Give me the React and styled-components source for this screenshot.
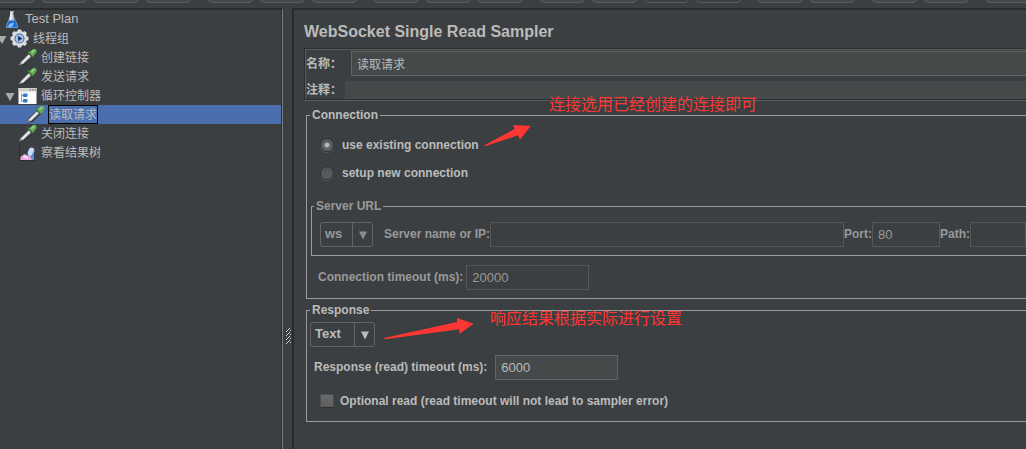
import React, { useState } from 'react';
import styled, { createGlobalStyle } from 'styled-components';

const GlobalStyle = createGlobalStyle`
  * {
    box-sizing: border-box;
  }

  body {
    margin: 0;
    background: #3c3f41;
    color: #bbbbbb;
    font-family: 'Liberation Sans', 'Noto Sans CJK SC', sans-serif;
    font-size: 12px;
    line-height: 14px;
    overflow: hidden;
  }

  input, select, button {
    font: inherit;
    color: inherit;
    margin: 0;
  }
`

const Window = styled.div`
  display: flex;
  flex-direction: column;
  height: 100vh;
`

const Toolbar = styled.div`
  display: flex;
  gap: 17px;
  height: 8px;
  margin-left: -10px;
  overflow: hidden;
`

const ToolGroup = styled.div`
  display: flex;
  flex: none;
  align-items: flex-end;
  height: 3px;
  gap: 7px;
`

const ToolButton = styled.button`
  width: 45px;
  height: 28px;
  padding: 0;
  border: 1px solid #5a5d5e;
  border-radius: 4px;
  background: ${props => props.$flat ? '#3c3f41' : '#45494a'};
`

const Main = styled.div`
  display: flex;
  flex: 1;
  min-height: 0;
`

const TreePanel = styled.nav`
  flex: none;
  width: 283px;
  border-top: 2px solid #292b2d;
  border-right: 1px solid #7b7d7e;
  box-shadow: inset -1px 0 0 #2b2d2f;
`

const TreeList = styled.ul`
  list-style: none;
  margin: 0 1px 0 0;
  padding: 0;
  overflow: hidden;
`

const TreeRow = styled.li`
  display: flex;
  align-items: center;
  gap: 2px;
  height: 19px;
  padding-left: ${props => 2 + props.$depth * 8}px;
  background: ${props => props.$selected ? '#4b6eaf' : 'transparent'};

  svg {
    flex: none;
    display: block;
  }
`

const Toggle = styled.button`
  flex: none;
  width: 12px;
  height: 19px;
  margin-left: -14px;
  padding: 2px 0 0;
  border: 0;
  background: none;
`

const NodeName = styled.span`
  height: 19px;
  padding: 0;
  border: 1px solid ${props => props.$selected ? '#000' : 'transparent'};
  line-height: ${props => props.$latin ? '16px' : '18px'};
  font-size: ${props => props.$latin ? '13px' : '12px'};
  margin-right: auto;
`

const Splitter = styled.div`
  flex: none;
  display: flex;
  align-items: center;
  justify-content: center;
  width: 9px;
  padding: 214px 0 0 1px;
`

const Editor = styled.main`
  position: relative;
  flex: 1;
  min-width: 0;
  padding-left: 10px;
  border-top: 2px solid #292b2d;
  border-left: 2px solid #292b2d;
`

const Title = styled.h1`
  margin: 0;
  height: 38px;
  padding-top: 12px;
  font-size: 16px;
  line-height: 20px;
`

const NamePanel = styled.div`
  display: flex;
  flex-direction: column;
  gap: 5px;
  padding: 2px 0 0 1px;
  border: 1px solid #2b2d2f;
  border-right: 0;
  box-shadow: inset 1px 1px 0 #5c5f60, 0 1px 0 #5c5f60;
`

const NameRow = styled.div`
  display: flex;
  align-items: center;
  gap: ${props => props.$gap}px;

  label {
    flex: none;
    width: 36px;
    font-weight: bold;
  }
`

const Field = styled.input`
  width: ${props => props.$width || 'auto'};
  flex: ${props => props.$grow ? '1' : 'none'};
  min-width: 0;
  height: 25px;
  padding: 0 5px 1px;
  border: 1px solid #646464;
  background: #45494a;
  font-size: 13px;
  font-weight: normal;
  outline: none;

  &:disabled {
    border-color: #555759;
    background: #3c3f41;
    color: #999999;
  }
`

const NameField = styled(Field)`
  padding: 0 5px;
  border-right: 0;
  font-size: 12px;
`

const CommentField = styled(NameField)`
  height: 18px;
  border: 0;
`

const Group = styled.fieldset`
  min-width: 0;
  margin: ${props => props.$margin};
  padding: ${props => props.$padding};
  border: 1px solid #999b9c;
  border-right: 0;
  font-weight: bold;

  legend {
    margin-left: 3px;
    padding: 0 2px;
  }

  &:disabled {
    color: #999999;
  }
`

const ServerGroup = styled(Group)`
  legend {
    margin-left: -6px;
  }
`

const OptionRow = styled.label`
  display: flex;
  align-items: center;
  gap: ${props => props.$gap || 8}px;
  height: 28px;
  padding-left: 13px;
`

const Radio = styled.input`
  appearance: none;
  width: 14px;
  height: 14px;
  border: 1px solid #303234;
  border-radius: 50%;
  background: linear-gradient(#4d5052, #5c5f61);
  box-shadow: 0 1px 0 #55585a;

  &:checked {
    background:
      radial-gradient(circle at center, #b4b4b4 2px, transparent 3px),
      linear-gradient(#55585a, #626567);
  }
`

const Check = styled.input`
  appearance: none;
  width: 14px;
  height: 14px;
  border: 1px solid #4a4d4f;
  border-bottom-color: #2c2e30;
  border-radius: 1px;
  background: linear-gradient(#6a6a6a, #5e5e5e);

  &:checked {
    background: #bbbbbb;
  }
`

const FieldRow = styled.div`
  display: flex;
  align-items: center;
  margin-top: ${props => props.$top || 0}px;
  padding-left: ${props => props.$left || 0}px;
  gap: ${props => props.$gap || 0}px;
`

const FieldLabel = styled.label`
  flex: none;
  padding-bottom: 2px;
  color: ${props => props.$dim ? '#999999' : 'inherit'};
`

const ServerFields = styled.div`
  display: flex;
  flex: 1;
  align-items: center;
  min-width: 0;
`

const ComboBox = styled.div`
  display: grid;
  grid-template-columns: 1fr 20px;
  flex: none;
  width: ${props => props.$width}px;
  height: 25px;
  border: 1px solid #646464;
  border-radius: 3px;

  select {
    grid-area: 1 / 1 / 2 / 3;
    appearance: none;
    padding: 0 0 1px 4px;
    border: 0;
    background: none;
    font-size: 13px;
    outline: none;
    opacity: 1;
  }
`

const ComboArrow = styled.span`
  grid-area: 1 / 2 / 2 / 3;
  display: flex;
  align-items: center;
  justify-content: center;
  padding-top: 2px;
  border-left: 1px solid #646464;
  pointer-events: none;
`

const Note = styled.p`
  position: absolute;
  left: ${props => props.$x}px;
  top: ${props => props.$y}px;
  margin: 0;
  color: #ff3633;
  font-size: 16px;
  line-height: 20px;
  white-space: nowrap;
`

const NoteArrow = styled.svg`
  position: absolute;
  left: ${props => props.$x}px;
  top: ${props => props.$y}px;
  fill: #ff3633;
`

const FlaskIcon = () => (
  <svg width="20" height="19" viewBox="0 0 20 19">
    <path d="M8 1h4v5.500l4 9.500q.5 2-1.500 2h-9q-2 0-1.500-2l4-9.500z" fill="#aebfd0" />
    <path d="M8.800 2h1.500v6l-3 5h-1z" fill="#e9eff5" />
    <path d="M7 10q3 1.500 6 0l2.500 6q.3 1.500-1 1.500h-9q-1.300 0-1-1.500z" fill="#1d6fd6" />
    <path d="M6 16q3-4 6-3l-2 4h-3z" fill="#7fc0ff" />
    <path d="M11 2h1v5l2 5-1.500-1z" fill="#50606e" />
  </svg>
)

const GearIcon = () => (
  <svg width="20" height="19" viewBox="0 0 20 19">
    <g fill="#d9dde1">
      <circle cx="9.500" cy="9.500" r="7.600" />
      {[0, 45, 90, 135].map(angle => (
        <rect key={angle} x="7.500" y="0.500" width="4" height="18" rx="1" transform={`rotate(${angle} 9.500 9.500)`} />
      ))}
    </g>
    <circle cx="9.500" cy="9.500" r="5" fill="#4a6a94" />
    <circle cx="9.500" cy="9.500" r="4" fill="#a9c4e4" />
    <path d="M8 6.800l4.500 2.700-4.500 2.700z" fill="#173e78" />
  </svg>
)

const DropperIcon = () => (
  <svg width="20" height="19" viewBox="0 0 20 19">
    <path d="M0.500 17.500l2-4L10.500 5.500l4 4-8 7.500z" fill="#2b2e30" />
    <path d="M0.500 17.500l2-3.500L10.500 6l3 3-8 7z" fill="#8e9496" />
    <path d="M3 14.800l8-8 1.300 1.300-8 8z" fill="#f2f4f4" />
    <path d="M9.500 4.500l5.500 5 1-1.200-5.300-5.300z" fill="#3f7d33" />
    <path d="M11 4.500l3.500-3q2-1.300 3.500 0t0 3.500l-3 3.600z" fill="#63ad52" />
    <path d="M13 4l2.500-2.200 1 .8-2.500 2.600z" fill="#a5dc93" />
  </svg>
)

const ControllerIcon = () => (
  <svg width="20" height="19" viewBox="0 0 20 19">
    <rect x="0.500" y="2" width="18" height="16" fill="#fbfbfb" />
    <rect x="0.500" y="2" width="18" height="3.500" fill="#d4d0ca" />
    <path d="M11.500 3h1.500v1.500h-1.500zM14 3h1.500v1.500H14z" fill="#8a8a8a" />
    <path d="M16.500 3h1.500v1.500h-1.500z" fill="#c96f4a" />
    <path d="M3.500 7v8.500H5M3.500 9.500H5" fill="none" stroke="#8aa0b8" />
    <rect x="5" y="7.500" width="4.500" height="3.500" rx="1" fill="#2d77c9" />
    <rect x="5" y="13" width="4.500" height="3.500" rx="1" fill="#2d77c9" />
  </svg>
)

const ChartIcon = () => (
  <svg width="20" height="19" viewBox="0 0 20 19">
    <path d="M1.500 2v15.500H17" fill="none" stroke="#23272c" strokeDasharray="2 1" />
    <path d="M2.500 17v-3l4-3 4 2 4 1 1.500 3z" fill="#f0a8dc" />
    <path d="M5 14l2-2 3 2v2z" fill="#fbdcf3" />
    <ellipse cx="13" cy="9" rx="3" ry="4.500" transform="rotate(20 13 9)" fill="#c5dcfa" />
    <path d="M12 13q3-1 3.500-7l.5 11h-2z" fill="#5c8fe0" />
  </svg>
)

const icons = {
  plan: FlaskIcon,
  group: GearIcon,
  sampler: DropperIcon,
  controller: ControllerIcon,
  listener: ChartIcon,
};

const nodes = [
  { name: 'Test Plan', depth: 0, type: 'plan' },
  { name: '线程组', depth: 1, type: 'group', open: true },
  { name: '创建链接', depth: 2, type: 'sampler' },
  { name: '发送请求', depth: 2, type: 'sampler' },
  { name: '循环控制器', depth: 2, type: 'controller', open: true },
  { name: '读取请求', depth: 3, type: 'sampler' },
  { name: '关闭连接', depth: 2, type: 'sampler' },
  { name: '察看结果树', depth: 2, type: 'listener' },
];

// number of buttons between two toolbar separators
const toolGroups = [4, 3, 3, 4, 2, 2, 2];

const Combo = ({ width, label, options, disabled }) => (
  <ComboBox $width={width}>
    <select aria-label={label} disabled={disabled} defaultValue={options[0]}>
      {options.map(option => <option key={option}>{option}</option>)}
    </select>
    <ComboArrow>
      <svg width="10" height="9" viewBox="0 0 10 9">
        <path d="M1 0.500h8L5 8.500z" fill={disabled ? '#8b8b8b' : '#bbbbbb'} />
      </svg>
    </ComboArrow>
  </ComboBox>
)

const App = () => {
  const [selected, setSelected] = useState('读取请求');
  const [connection, setConnection] = useState('existing');

  const onConnectionChange = (evt) => {
    setConnection(evt.target.value);
  };

  const reuse = connection === 'existing';

  return (
    <Window>
      <GlobalStyle />
      <Toolbar>
        {toolGroups.map((count, g) => (
          <ToolGroup key={g}>
            {Array.from({ length: count }, (_, i) => (
              <ToolButton key={i} type="button" $flat={g === 3 && i > 1} aria-label={`Tool ${g + 1}.${i + 1}`} />
            ))}
          </ToolGroup>
        ))}
      </Toolbar>
      <Main>
        <TreePanel>
          <TreeList role="tree">
            {nodes.map(node => {
              const Icon = icons[node.type];
              const isSelected = node.name === selected;
              return (
                <TreeRow
                  key={node.name}
                  role="treeitem"
                  aria-selected={isSelected}
                  $depth={node.depth}
                  $selected={isSelected}
                  onClick={() => setSelected(node.name)}
                >
                  {node.open && (
                    <Toggle type="button" aria-label={`Collapse ${node.name}`}>
                      <svg width="12" height="10" viewBox="0 0 12 10">
                        <path d="M1.500 1h9L6 9z" fill="#a9abac" />
                      </svg>
                    </Toggle>
                  )}
                  <Icon />
                  <NodeName $selected={isSelected} $latin={node.type === 'plan'}>{node.name}</NodeName>
                </TreeRow>
              );
            })}
          </TreeList>
        </TreePanel>
        <Splitter>
          <svg width="5" height="16" viewBox="0 0 5 16">
            {[0, 4, 8, 12].map(y => (
              <path key={y} d={`M3 ${y}h1v1H3zM2 ${y + 1}h1v1H2zM1 ${y + 2}h1v1H1zM4 ${y + 2}h1v1H4zM0 ${y + 3}h1v1H0z`} fill="#d0d0d0" />
            ))}
          </svg>
        </Splitter>
        <Editor>
          <Title>WebSocket Single Read Sampler</Title>
          <NamePanel>
            <NameRow $gap={9}>
              <label htmlFor="name">名称：</label>
              <NameField id="name" $grow defaultValue="读取请求" />
            </NameRow>
            <NameRow $gap={3}>
              <label htmlFor="comment">注释：</label>
              <CommentField id="comment" $grow />
            </NameRow>
          </NamePanel>

          <Group $margin="8px 0 0 2px" $padding="9px 0 8px 0">
            <legend>Connection</legend>
            <OptionRow>
              <Radio type="radio" name="connection" value="existing" checked={reuse} onChange={onConnectionChange} />
              use existing connection
            </OptionRow>
            <OptionRow>
              <Radio type="radio" name="connection" value="new" checked={!reuse} onChange={onConnectionChange} />
              setup new connection
            </OptionRow>
            <ServerGroup disabled={reuse} $margin="12px 0 0 4px" $padding="9px 0 8px 8px">
              <legend>Server URL</legend>
              <FieldRow $gap={11}>
                <Combo width={53} label="Protocol" options={['ws', 'wss']} disabled={reuse} />
                <ServerFields>
                  <FieldLabel htmlFor="server">Server name or IP:</FieldLabel>
                  <Field id="server" $grow />
                  <FieldLabel htmlFor="port">Port:</FieldLabel>
                  <Field id="port" $width="68px" defaultValue="80" />
                  <FieldLabel htmlFor="path">Path:</FieldLabel>
                  <Field id="path" $width="56px" />
                </ServerFields>
              </FieldRow>
            </ServerGroup>
            <FieldRow $top={9} $left={11} $gap={3}>
              <FieldLabel htmlFor="connectTimeout" $dim={reuse}>Connection timeout (ms):</FieldLabel>
              <Field id="connectTimeout" $width="123px" defaultValue="20000" disabled={reuse} />
            </FieldRow>
          </Group>

          <Group $margin="4px 0 0 2px" $padding="5px 0 6px 0">
            <legend>Response</legend>
            <FieldRow $left={3}>
              <Combo width={65} label="Response type" options={['Text', 'Binary']} />
            </FieldRow>
            <FieldRow $top={8} $left={7} $gap={8}>
              <FieldLabel htmlFor="readTimeout">Response (read) timeout (ms):</FieldLabel>
              <Field id="readTimeout" $width="123px" defaultValue="6000" />
            </FieldRow>
            <FieldRow $top={7}>
              <OptionRow $gap={6}>
                <Check type="checkbox" />
                Optional read (read timeout will not lead to sampler error)
              </OptionRow>
            </FieldRow>
          </Group>

          <Note $x={255} $y={85}>连接选用已经创建的连接即可</Note>
          <NoteArrow $x={190} $y={113} width="50" height="26" viewBox="484 123 50 26">
            <path d="M484 145.500L514.700 129l-1.500-4 17.500 1-10.700 13.800-2-4.500-33 11z" />
          </NoteArrow>
          <Note $x={196} $y={299}>响应结果根据实际进行设置</Note>
          <NoteArrow $x={90} $y={306} width="92" height="24" viewBox="384 316 92 24">
            <path d="M384 338L457 322v-4l16.700 5.700-14 10-.7-4.500-74 10z" />
          </NoteArrow>
        </Editor>
      </Main>
    </Window>
  )
}

export default App;
